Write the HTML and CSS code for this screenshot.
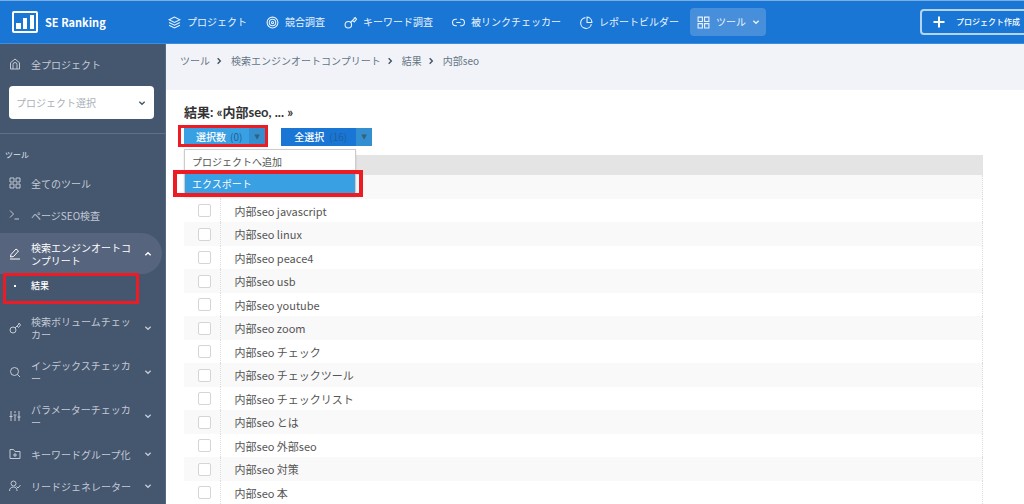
FILE: index.html
```html
<!DOCTYPE html>
<html lang="ja">
<head>
<meta charset="utf-8">
<meta name="viewport" content="width=device-width, initial-scale=1">
<title>SE Ranking</title>
<link rel="stylesheet" href="styles.css">
</head>
<body>
<svg class="sprite" aria-hidden="true">
  <symbol id="layers" viewBox="0 0 24 24"><path d="M12 2 2 7l10 5 10-5zM2 12l10 5 10-5M2 17l10 5 10-5"/></symbol>
  <symbol id="target" viewBox="0 0 24 24"><circle cx="12" cy="12" r="10"/><circle cx="12" cy="12" r="6"/><circle cx="12" cy="12" r="2"/></symbol>
  <symbol id="key" viewBox="0 0 24 24"><circle cx="8" cy="16" r="6"/><path d="M12 12 21 3M16 8l3 3 4-5-2-3-3 1"/></symbol>
  <symbol id="link" viewBox="0 0 24 24"><path d="M9 6H7a6 6 0 0 0 0 12h2M15 6h2a6 6 0 0 1 0 12h-2M8 12h8"/></symbol>
  <symbol id="pie" viewBox="0 0 24 24"><path d="M10 3A10 10 0 1 0 21 15M13 2v10h9A10 10 0 0 0 13 2z"/></symbol>
  <symbol id="grid" viewBox="0 0 24 24"><path d="M2 2h8v8H2zM14 2h8v8h-8zM2 14h8v8H2zM14 14h8v8h-8z"/></symbol>
  <symbol id="down" viewBox="0 0 24 24"><path d="m4 8 8 8 8-8"/></symbol>
  <symbol id="up" viewBox="0 0 24 24"><path d="m4 16 8-8 8 8"/></symbol>
  <symbol id="right" viewBox="0 0 24 24"><path d="m8 4 8 8-8 8"/></symbol>
  <symbol id="plus" viewBox="0 0 24 24"><path d="M12 1v22M1 12h22"/></symbol>
  <symbol id="home" viewBox="0 0 24 24"><path d="M3 9.500 12 2l9 7.500V22H3zM8 22v-9a4 4 0 0 1 8 0v9"/></symbol>
  <symbol id="prompt" viewBox="0 0 24 24"><path d="m2 3 7 7-7 7M11 20h9"/></symbol>
  <symbol id="pen" viewBox="0 0 24 24"><path d="m4 13 10-11 5 4-10 11-6 1zM2 22h20"/></symbol>
  <symbol id="search" viewBox="0 0 24 24"><circle cx="11" cy="11" r="8"/><path d="m17 17 5 5"/></symbol>
  <symbol id="sliders" viewBox="0 0 24 24"><path d="M4 2v10M4 17v5M12 2v4M12 11v11M20 2v11M20 18v4M1 13h6M9 10h6M17 14h6M4 12v5M20 13v5"/></symbol>
  <symbol id="folder" viewBox="0 0 24 24"><path d="M2 3h7l3 4h10v14H2zM12 10v8M8 14h8"/></symbol>
  <symbol id="user" viewBox="0 0 24 24"><circle cx="9" cy="7" r="5"/><path d="M1 22c0-5 3-8 8-8s7 3 7 8M15 13l3 3 5-6"/></symbol>
</svg>

<header class="topbar">
  <a class="brand" href="#">
    <svg class="brand-logo" viewBox="0 0 26 22" aria-hidden="true"><rect x="1" y="1" width="24" height="20" rx="1" fill="none" stroke="currentColor" stroke-width="2"/><path fill="currentColor" d="M4 12h5v6H4zM11 7h4v11h-4zM18 4h4v14h-4z"/></svg>
    <span>SE Ranking</span>
  </a>
  <nav class="nav" aria-label="メイン">
    <a href="#"><svg class="icon"><use href="#layers"/></svg>プロジェクト</a>
    <a href="#"><svg class="icon"><use href="#target"/></svg>競合調査</a>
    <a href="#"><svg class="icon"><use href="#key"/></svg>キーワード調査</a>
    <a href="#"><svg class="icon"><use href="#link"/></svg>被リンクチェッカー</a>
    <a href="#"><svg class="icon"><use href="#pie"/></svg>レポートビルダー</a>
    <button class="nav-tools" type="button"><svg class="icon"><use href="#grid"/></svg>ツール<svg class="chevron"><use href="#down"/></svg></button>
  </nav>
  <button class="create" type="button"><svg class="plus"><use href="#plus"/></svg>プロジェクト作成</button>
</header>

<div class="layout">
  <aside class="sidebar">
    <div class="projects">
      <a class="side-item" href="#"><svg class="icon"><use href="#home"/></svg><span class="label">全プロジェクト</span></a>
      <div class="picker">
        <select aria-label="プロジェクト選択"><option>プロジェクト選択</option></select>
        <svg class="chevron"><use href="#down"/></svg>
      </div>
    </div>
    <h2 class="side-title">ツール</h2>
    <nav class="side-nav" aria-label="ツール">
      <a class="side-item" href="#"><svg class="icon"><use href="#grid"/></svg><span class="label">全てのツール</span></a>
      <a class="side-item" href="#"><svg class="icon"><use href="#prompt"/></svg><span class="label">ページSEO検査</span></a>
      <a class="side-item active" href="#"><svg class="icon"><use href="#pen"/></svg><span class="label">検索エンジンオートコンプリート</span><svg class="chevron"><use href="#up"/></svg></a>
      <div class="sub"><a href="#">結果</a><i class="mark mark-result"></i></div>
      <a class="side-item tall" href="#"><svg class="icon"><use href="#key"/></svg><span class="label">検索ボリュームチェッカー</span><svg class="chevron"><use href="#down"/></svg></a>
      <a class="side-item tall" href="#"><svg class="icon"><use href="#search"/></svg><span class="label">インデックスチェッカー</span><svg class="chevron"><use href="#down"/></svg></a>
      <a class="side-item tall" href="#"><svg class="icon"><use href="#sliders"/></svg><span class="label">パラメーターチェッカー</span><svg class="chevron"><use href="#down"/></svg></a>
      <a class="side-item" href="#"><svg class="icon"><use href="#folder"/></svg><span class="label">キーワードグループ化</span><svg class="chevron"><use href="#down"/></svg></a>
      <a class="side-item" href="#"><svg class="icon"><use href="#user"/></svg><span class="label">リードジェネレーター</span><svg class="chevron"><use href="#down"/></svg></a>
    </nav>
  </aside>

  <main class="main">
    <nav class="crumbs" aria-label="パンくず">
      <a href="#">ツール</a><svg class="sep"><use href="#right"/></svg>
      <a href="#">検索エンジンオートコンプリート</a><svg class="sep"><use href="#right"/></svg>
      <a href="#">結果</a><svg class="sep"><use href="#right"/></svg>
      <span>内部seo</span>
    </nav>
    <section class="content">
      <h1>結果: «内部seo, ... »</h1>
      <div class="actions">
        <div class="split">
          <button class="action selected" type="button"><span class="action-text">選択数<span class="count">(0)</span></span><span class="arrow">▼</span></button>
          <div class="menu">
            <button type="button">プロジェクトへ追加</button>
            <button class="current" type="button">エクスポート</button>
            <i class="mark mark-export"></i>
          </div>
          <i class="mark mark-selected"></i>
        </div>
        <button class="action" type="button"><span class="action-text">全選択<span class="count">(16)</span></span><span class="arrow">▼</span></button>
      </div>
      <table class="results">
        <thead><tr><th class="pick"></th><th></th></tr></thead>
        <tbody>
          <tr><td class="pick"></td><td></td></tr>
          <tr><td class="pick"><input type="checkbox" id="k1"></td><td><label for="k1">内部seo javascript</label></td></tr>
          <tr><td class="pick"><input type="checkbox" id="k2"></td><td><label for="k2">内部seo linux</label></td></tr>
          <tr><td class="pick"><input type="checkbox" id="k3"></td><td><label for="k3">内部seo peace4</label></td></tr>
          <tr><td class="pick"><input type="checkbox" id="k4"></td><td><label for="k4">内部seo usb</label></td></tr>
          <tr><td class="pick"><input type="checkbox" id="k5"></td><td><label for="k5">内部seo youtube</label></td></tr>
          <tr><td class="pick"><input type="checkbox" id="k6"></td><td><label for="k6">内部seo zoom</label></td></tr>
          <tr><td class="pick"><input type="checkbox" id="k7"></td><td><label for="k7">内部seo チェック</label></td></tr>
          <tr><td class="pick"><input type="checkbox" id="k8"></td><td><label for="k8">内部seo チェックツール</label></td></tr>
          <tr><td class="pick"><input type="checkbox" id="k9"></td><td><label for="k9">内部seo チェックリスト</label></td></tr>
          <tr><td class="pick"><input type="checkbox" id="k10"></td><td><label for="k10">内部seo とは</label></td></tr>
          <tr><td class="pick"><input type="checkbox" id="k11"></td><td><label for="k11">内部seo 外部seo</label></td></tr>
          <tr><td class="pick"><input type="checkbox" id="k12"></td><td><label for="k12">内部seo 対策</label></td></tr>
          <tr><td class="pick"><input type="checkbox" id="k13"></td><td><label for="k13">内部seo 本</label></td></tr>
        </tbody>
      </table>
    </section>
  </main>
</div>
</body>
</html>
```
FILE: styles.css
```css
* { box-sizing: border-box; }

body {
  margin: 0;
  font: 10px/14px "Noto Sans CJK JP", sans-serif;
  color: #555;
  background: #fff;
  overflow: hidden;
}

a { color: inherit; text-decoration: none; }
button { font: inherit; color: inherit; border: 0; margin: 0; padding: 0; background: none; cursor: pointer; }
svg { fill: none; stroke: currentColor; stroke-width: 2; flex: none; }
.sprite { display: none; }
.icon { width: 13px; height: 13px; }
.chevron { width: 8px; height: 8px; stroke-width: 4; }

/* Top bar */
.topbar {
  display: flex;
  align-items: center;
  height: 44px;
  padding-left: 12px;
  color: #fff;
  background: #1976d5;
  border-top: 1px solid #79afe2;
  border-bottom: 1px solid #3d8ee0;
  overflow: hidden;
}
.brand { display: flex; align-items: center; gap: 7px; width: 156px; flex: none; font: bold 11px/16px "Noto Sans CJK JP", sans-serif; }
.brand-logo { width: 26px; height: 22px; stroke: none; }
.nav { display: flex; align-items: center; gap: 19px; white-space: nowrap; color: #eaf3fc; }
.nav a, .nav-tools { display: flex; align-items: center; gap: 6px; }
.nav-tools { height: 28px; padding: 0 6px 0 7px; margin-left: -8px; border-radius: 4px; background: #478fdb; }
.create {
  display: flex;
  align-items: center;
  flex: none;
  gap: 11px;
  height: 26px;
  margin-left: auto;
  margin-right: -8px;
  padding: 0 10px 0 11px;
  border: 2px solid #b5d4f3;
  border-radius: 4px;
  font-size: 8px;
  font-weight: 500;
}
.plus { width: 12px; height: 12px; stroke-width: 4; }

.layout { display: flex; }

/* Sidebar */
.sidebar { width: 166px; flex: none; padding-bottom: 8px; color: #c3cad4; background: #45566f; border-right: 1px solid #596980; }
.projects { padding: 4px 0 14px; border-bottom: 1px solid #60708a; }
.side-item { display: flex; align-items: center; min-height: 32px; padding: 0 10px 0 9px; line-height: 13px; }
.side-item .label { flex: 1; margin-left: 10px; margin-right: 8px; line-break: anywhere; }
.side-item .icon { width: 12px; height: 12px; }
.side-item .chevron { margin-right: 3px; }
.tall { min-height: 44px; }
.picker { display: flex; align-items: center; margin: 6px 11px 0 9px; height: 33px; border-radius: 4px; background: #fff; color: #455560; padding-right: 8px; }
.picker select { flex: 1; min-width: 0; height: 100%; appearance: none; border: 0; padding: 0 7px; background: none; color: #aab0b8; font: inherit; }
.side-title { margin: 14px 5px 5px; font-size: 8px; font-weight: 400; line-height: 14px; color: #e0e5ec; }
.side-item.active { min-height: 41px; margin: 2px 3px 0 0; padding-right: 7px; border-radius: 0 21px 21px 0; color: #fff; background: #56657d; }
.sub { position: relative; padding: 5px 0 13px; color: #fff; }
.sub a { display: flex; align-items: center; font-size: 9px; font-weight: 500; }
.sub a::before { content: ""; width: 2px; height: 2px; margin: 0 15px 0 14px; background: #fff; }

/* Content */
.main { flex: 1; min-width: 0; }
.crumbs { display: flex; align-items: flex-start; height: 46px; padding: 10px 14px; background: #f2f3f8; color: #637584; }
.sep { width: 8px; height: 8px; margin: 3px 8px 0 5px; stroke-width: 4; color: #405060; }
.content { padding: 13px 41px 0 18px; }
h1 { margin: 0; font: bold 13px/18px Lato, "Noto Sans CJK JP", sans-serif; color: #333; }
.actions { display: flex; gap: 16px; padding: 7px 0 9px; }
.split { position: relative; }
.action { display: flex; height: 18px; color: #fff; background: #1976d5; font-weight: 500; line-height: 17px; }
.action-text { display: flex; gap: 5px; padding: 0 9px 0 13px; }
.action.selected { background: #39a0e3; }
.action.selected .action-text { gap: 4px; padding: 0 7px 0 12px; }
.count { font-weight: 400; color: #205f98; }
.arrow { width: 16px; font: 7px/18px "DejaVu Sans", sans-serif; text-align: center; color: #356079; background: #348fd0; }

.menu { position: absolute; z-index: 2; top: 21px; left: 0; width: 172px; border: 1px solid #ccc; background: #fff; box-shadow: 0 1px 2px #0002; }
.menu button { display: block; width: 100%; height: 23px; padding: 0 7px; text-align: left; }
.menu .current { height: 22px; color: #fff; background: #39a0e3; }

.results { width: 100%; border-collapse: collapse; table-layout: fixed; font-size: 11px; line-height: 20px; }
.results th { height: 20px; padding: 0; background: #e4e4e4; }
.results td { height: 23px; padding: 0 14px; }
.results tr:nth-child(odd) td { height: 24px; background: #f9f9f9; }
.results .pick { width: 36px; padding: 0; }
.results td.pick { border-right: 1px dotted #ddd; }
.results td:last-child { border-right: 1px dotted #ddd; }
.results input { display: block; appearance: none; width: 13px; height: 13px; margin: 0 0 0 14px; border: 1px solid #d5d5d5; border-radius: 2px; background: #fff; }

/* Highlight frames */
.mark { position: absolute; z-index: 3; border: 3px solid #ed1c24; pointer-events: none; }
.mark-result { top: -1px; left: 3px; width: 136px; height: 31px; }
.mark-selected { top: -3px; left: -6px; width: 90px; height: 22px; }
.mark-export { top: 20px; left: -12px; width: 190px; height: 27px; border-width: 4px; }
```
